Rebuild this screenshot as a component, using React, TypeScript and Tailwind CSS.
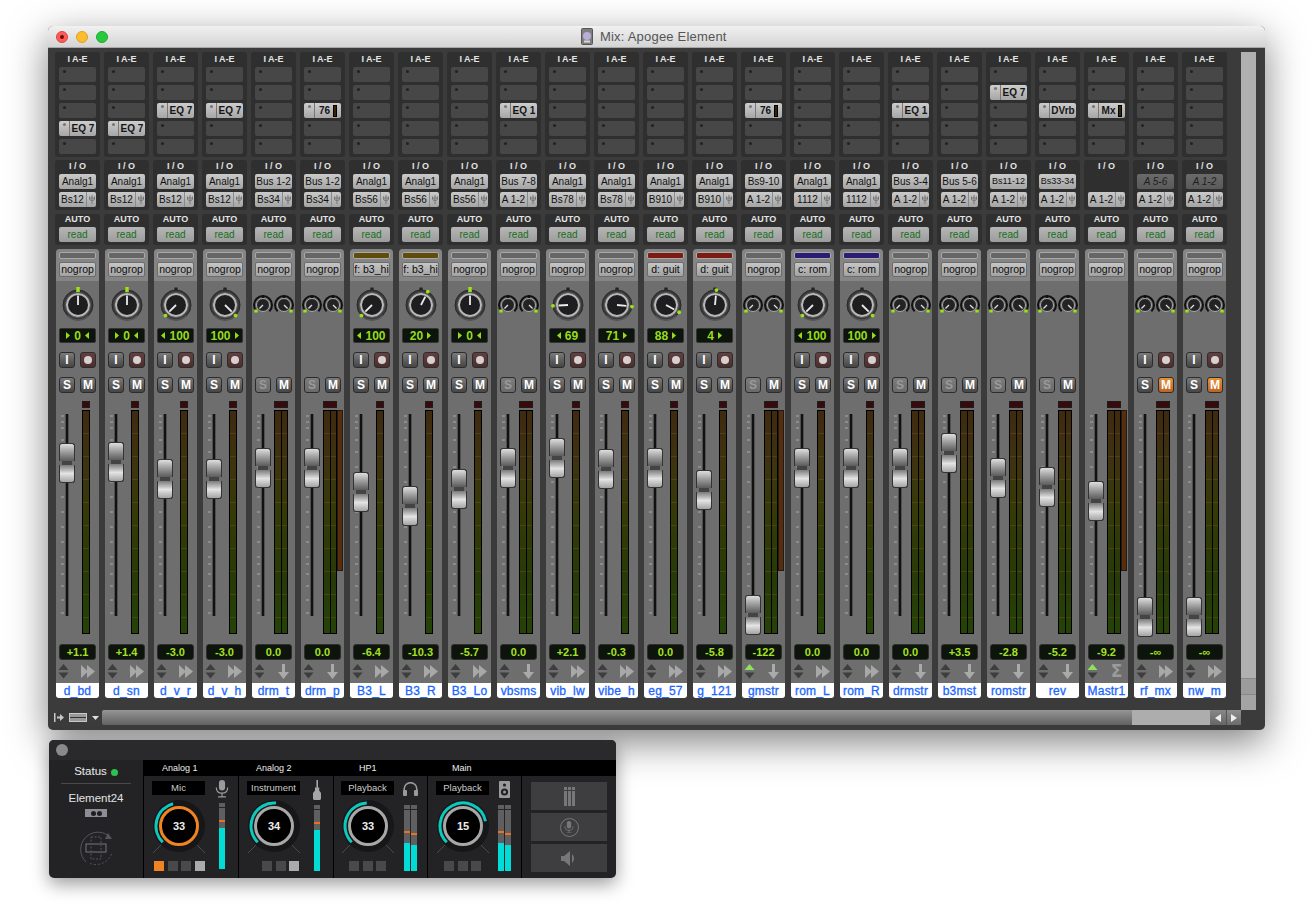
interface Channel {
  name: string
  input: string
  output: string
  value: string
  fader: number
  insert?: [number, string, boolean?]
  group?: string
  bar?: string
  pan?: number
  panText?: string
  stereo?: boolean
  extra?: boolean
  noRec?: boolean
  icon?: 'send' | 'down' | 'sum'
  up?: boolean
  muted?: boolean
}

const channels: Channel[] = [
  { name: 'd_bd', input: 'Analg1', output: 'Bs12', value: '+1.1', fader: 463, insert: [3, 'EQ 7'], pan: 0, panText: '0', icon: 'send' },
  { name: 'd_sn', input: 'Analg1', output: 'Bs12', value: '+1.4', fader: 462, insert: [3, 'EQ 7'], pan: 0, panText: '0', icon: 'send' },
  { name: 'd_v_r', input: 'Analg1', output: 'Bs12', value: '-3.0', fader: 479, insert: [2, 'EQ 7'], pan: -100, panText: '100', icon: 'send' },
  { name: 'd_v_h', input: 'Analg1', output: 'Bs12', value: '-3.0', fader: 479, insert: [2, 'EQ 7'], pan: 100, panText: '100', icon: 'send' },
  { name: 'drm_t', input: 'Bus 1-2', output: 'Bs34', value: '0.0', fader: 468, stereo: true, noRec: true, icon: 'down' },
  { name: 'drm_p', input: 'Bus 1-2', output: 'Bs34', value: '0.0', fader: 468, insert: [2, '76', true], stereo: true, extra: true, noRec: true, icon: 'down' },
  { name: 'B3_L', input: 'Analg1', output: 'Bs56', value: '-6.4', fader: 492, group: 'f: b3_hi', bar: 'bg-[#5f4c0a]', pan: -100, panText: '100', icon: 'send' },
  { name: 'B3_R', input: 'Analg1', output: 'Bs56', value: '-10.3', fader: 506, group: 'f: b3_hi', bar: 'bg-[#5f4c0a]', pan: 20, panText: '20', icon: 'send' },
  { name: 'B3_Lo', input: 'Analg1', output: 'Bs56', value: '-5.7', fader: 489, pan: 0, panText: '0', icon: 'send' },
  { name: 'vbsms', input: 'Bus 7-8', output: 'A 1-2', value: '0.0', fader: 468, insert: [2, 'EQ 1'], stereo: true, noRec: true, icon: 'down' },
  { name: 'vib_lw', input: 'Analg1', output: 'Bs78', value: '+2.1', fader: 458, pan: -69, panText: '69', icon: 'send' },
  { name: 'vibe_h', input: 'Analg1', output: 'Bs78', value: '-0.3', fader: 469, pan: 71, panText: '71', icon: 'send' },
  { name: 'eg_57', input: 'Analg1', output: 'B910', value: '0.0', fader: 468, group: 'd: guit', bar: 'bg-[#7d1a12]', pan: 88, panText: '88', icon: 'send' },
  { name: 'g_121', input: 'Analg1', output: 'B910', value: '-5.8', fader: 490, group: 'd: guit', bar: 'bg-[#7d1a12]', pan: 4, panText: '4', icon: 'send' },
  { name: 'gmstr', input: 'Bs9-10', output: 'A 1-2', value: '-122', fader: 615, insert: [2, '76', true], stereo: true, extra: true, noRec: true, icon: 'down', up: true },
  { name: 'rom_L', input: 'Analg1', output: '1112', value: '0.0', fader: 468, group: 'c: rom', bar: 'bg-[#2a1c72]', pan: -100, panText: '100', icon: 'send' },
  { name: 'rom_R', input: 'Analg1', output: '1112', value: '0.0', fader: 468, group: 'c: rom', bar: 'bg-[#2a1c72]', pan: 100, panText: '100', icon: 'send' },
  { name: 'drmstr', input: 'Bus 3-4', output: 'A 1-2', value: '0.0', fader: 468, insert: [2, 'EQ 1'], stereo: true, noRec: true, icon: 'down' },
  { name: 'b3mst', input: 'Bus 5-6', output: 'A 1-2', value: '+3.5', fader: 453, stereo: true, noRec: true, icon: 'down' },
  { name: 'romstr', input: 'Bs11-12', output: 'A 1-2', value: '-2.8', fader: 478, insert: [1, 'EQ 7'], stereo: true, noRec: true, icon: 'down' },
  { name: 'rev', input: 'Bs33-34', output: 'A 1-2', value: '-5.2', fader: 487, insert: [2, 'DVrb'], stereo: true, noRec: true, icon: 'down' },
  { name: 'Mastr1', input: '', output: 'A 1-2', value: '-9.2', fader: 501, insert: [2, 'Mx', true], stereo: true, extra: true, icon: 'sum', up: true },
  { name: 'rf_mx', input: 'A 5-6', output: 'A 1-2', value: '-∞', fader: 617, stereo: true, icon: 'send', muted: true },
  { name: 'nw_m', input: 'A 1-2', output: 'A 1-2', value: '-∞', fader: 617, stereo: true, icon: 'send', muted: true },
]

const scaleTicks = [2, 8, 14, 26, 38, 53, 68, 83, 98, 113, 128, 143, 150, 160, 172, 186, 199]

function Knob({ pan }: { pan: number }) {
  const angle = (pan / 100) * 135
  const rad = (angle * Math.PI) / 180
  return (
    <svg width="36" height="36" viewBox="-18 -18 36 36">
      <path d="M-1.5 -17.5 H1.5 L2 -14 H-2 Z" fill="#222" />
      <circle r="15" fill="#3a3a3a" stroke="#2a2a2a" />
      <path d="M-10.6 10.6 A15 15 0 0 0 10.6 10.6" fill="none" stroke="#555" strokeWidth="1.5" />
      <circle r="11" fill="#1e1e20" stroke="#b8b8b8" strokeWidth="2" />
      <circle r="12.5" fill="none" stroke="#666" strokeWidth="0.8" />
      <line x1="0" y1="0" x2={Math.sin(rad) * 9.5} y2={-Math.cos(rad) * 9.5} stroke="#ececec" strokeWidth="1.8" />
      {pan === 0 ? (
        <rect x="-1.8" y="-18" width="3.6" height="5" fill="#9be21c" />
      ) : (
        <circle cx={Math.sin(rad) * 15} cy={-Math.cos(rad) * 15} r="1.9" fill="#9be21c" />
      )}
    </svg>
  )
}

function SmallKnob({ side }: { side: 1 | -1 }) {
  const rad = (side * 135 * Math.PI) / 180
  return (
    <svg width="20" height="20" viewBox="-10 -10 20 20">
      <path d="M-6.4 6.4 A9 9 0 1 1 6.4 6.4" fill="none" stroke="#111" strokeWidth="2" />
      <circle r="6.5" fill="#232325" stroke="#a8a8a8" />
      <path d="M-1 -10 L1 -10 L1.4 -7 L-1.4 -7 Z" fill="#111" />
      <line x1="0" y1="0" x2={Math.sin(rad) * 5} y2={-Math.cos(rad) * 5} stroke="#ddd" strokeWidth="1.3" />
      <rect x={side * 7 - 1.7} y="4.5" width="3.4" height="3" fill="#9be21c" />
    </svg>
  )
}

function Insert({ insert }: { insert?: [number, string, boolean?] }) {
  const slots = [0, 1, 2, 3, 4]
  return (
    <div className="flex flex-col gap-[3px]">
      {slots.map((s) =>
        insert && insert[0] === s ? (
          <div key={s} className="h-[15px] flex rounded-[2px] overflow-hidden bg-linear-to-b from-[#cdcdcd] to-[#a6a6a6]">
            <div className="w-[11px] border-r border-[#777] flex justify-center pt-[2px]">
              <div className="w-[3px] h-[3px] rounded-full bg-[#777]" />
            </div>
            <div className="flex-1 flex items-center justify-center gap-[3px] text-[10px] font-bold text-[#151515] leading-none">
              {insert[1]}
              {insert[2] && <div className="w-[4px] h-[12px] bg-[#3a2206] border border-black" />}
            </div>
          </div>
        ) : (
          <div key={s} className="h-[15px] rounded-[2px] bg-[#474747] pl-[4px] pt-[3px]">
            <div className="w-[3px] h-[3px] rounded-full bg-[#222]" />
          </div>
        ),
      )}
    </div>
  )
}

function SquareButton({ kind, label }: { kind: 'gray' | 'rec' | 'off' | 'orange'; label?: string }) {
  const tone = {
    gray: 'from-[#7a7a7a] to-[#454545] text-white',
    rec: 'from-[#64403f] to-[#4a2e2e] text-white',
    off: 'from-[#7c7c7c] to-[#6a6a6a] text-[#9a9a9a]',
    orange: 'from-[#e8923c] to-[#bd6420] text-white',
  }[kind]
  return (
    <div className={`w-[16px] h-[16px] rounded-[3px] border border-[#2c2c2c] bg-linear-to-b ${tone} flex items-center justify-center text-[12px] font-bold leading-none`}>
      {kind === 'rec' ? <div className="w-[8px] h-[8px] rounded-full bg-[#d8d0d0]" /> : label}
    </div>
  )
}

function Triangles({ up }: { up?: boolean }) {
  return (
    <svg width="11" height="15" viewBox="0 0 11 15">
      <path d="M5.5 0 L10.5 6 L0.5 6 Z" fill={up ? '#8fe05a' : '#3d3d3d'} />
      <path d="M0.5 8.5 L10.5 8.5 L5.5 14.5 Z" fill="#3d3d3d" />
    </svg>
  )
}

function RouteIcon({ icon }: { icon?: Channel['icon'] }) {
  if (icon === 'sum') {
    return <span className="text-[17px] leading-none font-bold text-[#9c9c9c] font-['DejaVu_Sans',sans-serif]">Σ</span>
  }
  if (icon === 'down') {
    return (
      <svg width="11" height="15" viewBox="0 0 11 15">
        <path d="M4 0 H7 V8 H11 L5.5 15 L0 8 H4 Z" fill="#aaaaaa" />
      </svg>
    )
  }
  return (
    <svg width="14" height="13" viewBox="0 0 14 13">
      <path d="M0 0 L7 6.5 L0 13 Z M6 0 L14 6.5 L6 13 Z" fill="#a8a8a8" />
    </svg>
  )
}

function Meter({ width }: { width: string }) {
  return (
    <div className={`${width} h-full border border-black bg-[repeating-linear-gradient(to_bottom,transparent_0,transparent_22px,rgba(190,110,40,0.22)_22px,rgba(190,110,40,0.22)_23px),linear-gradient(to_bottom,#3f2a10_0%,#3d3410_25%,#353a08_45%,#273a08_75%,#264208_100%)]`} />
  )
}

function PanArrow({ right }: { right: boolean }) {
  return (
    <svg width="4" height="7" viewBox="0 0 4 7">
      <path d={right ? 'M0 0 L4 3.5 L0 7 Z' : 'M4 0 L0 3.5 L4 7 Z'} fill="#96dc1a" />
    </svg>
  )
}

function Strip({ ch }: { ch: Channel }) {
  const dim = ch.input === 'A 5-6' || (ch.input === 'A 1-2' && ch.muted)
  const longInput = ch.input.startsWith('Bs') && ch.input.length > 6
  return (
    <div className="w-[49px] shrink-0 pt-[4px]">
      <div className="mx-[2px] h-[105px] bg-[#2f2f2f] rounded-[3px] px-[4px]">
        <div className="h-[15px] text-center text-[9px] leading-[14px] font-bold text-[#e4e4e4]">I A-E</div>
        <Insert insert={ch.insert} />
      </div>

      <div className="mx-[2px] mt-[3px] h-[50px] bg-[#2f2f2f] rounded-[3px] px-[4px]">
        <div className="h-[14px] text-center text-[9px] leading-[13px] font-bold text-[#e4e4e4]">I / O</div>
        {ch.input === '' ? (
          <div className="h-[15px]" />
        ) : (
          <div className={`h-[15px] rounded-[2px] bg-linear-to-b flex items-center justify-center whitespace-nowrap leading-none ${longInput ? 'text-[9px]' : 'text-[10px]'} ${dim ? 'from-[#6a6a6a] to-[#5a5a5a] italic text-[#1e1e1e]' : 'from-[#cacaca] to-[#a4a4a4] text-[#111]'}`}>
            {ch.input}
          </div>
        )}
        <div className="mt-[3px] h-[15px] rounded-[2px] bg-linear-to-b from-[#cacaca] to-[#a4a4a4] flex text-[10px] text-[#111] leading-none">
          <div className="flex-1 flex items-center justify-center">{ch.output}</div>
          <div className="w-[10px] border-l border-[#8a8a8a] flex items-center justify-center">
            <svg width="6" height="9" viewBox="0 0 6 9">
              <path d="M3 0 V9 M0.5 3 H5.5 M0.5 1.5 V4 Q0.5 5.5 3 5.5 Q5.5 5.5 5.5 4 V1.5" fill="none" stroke="#777" />
            </svg>
          </div>
        </div>
      </div>

      <div className="mx-[2px] mt-[4px] h-[31px] bg-[#2f2f2f] rounded-[3px] px-[4px]">
        <div className="h-[13px] text-center text-[9px] leading-[11px] font-bold text-[#e4e4e4]">AUTO</div>
        <div className="h-[15px] rounded-[2px] bg-linear-to-b from-[#b6b6b6] to-[#9c9c9c] flex items-center justify-center text-[10px] leading-none text-[#16701a]">
          read
        </div>
      </div>

      <div className="mx-[3px] mt-[4px] h-[449px] bg-[#6e6e6e] rounded-[4px]">
        <div className="h-[32px] bg-[#858585] rounded-t-[4px] px-[3px] pt-[3px]">
          <div className={`h-[7px] rounded-[2px] border border-[#a8a8a8] ${ch.bar ?? 'bg-[#666]'}`} />
          <div className="mt-[3px] h-[15px] rounded-[2px] border border-[#6c6c6c] bg-linear-to-b from-[#c6c6c6] to-[#a2a2a2] flex items-center justify-center text-[10.5px] leading-none text-[#0c0c0c] whitespace-nowrap">
            {ch.group ?? 'nogrop'}
          </div>
        </div>

        <div className="h-[47px] flex justify-center pt-[6px]">
          {ch.stereo ? (
            ch.name !== 'Mastr1' && (
              <div className="flex gap-[1px] pt-[8px]">
                <SmallKnob side={-1} />
                <SmallKnob side={1} />
              </div>
            )
          ) : (
            <Knob pan={ch.pan ?? 0} />
          )}
        </div>

        <div className="h-[15px] mx-[3px]">
          {ch.panText && (
            <div className="h-full rounded-[2px] border border-[#333] bg-[#0c140c] flex items-center justify-center gap-[4px] text-[12px] font-bold leading-none text-[#96dc1a]">
              {ch.pan !== undefined && ch.pan <= 0 && <PanArrow right={ch.pan === 0} />}
              {ch.panText}
              {ch.pan !== undefined && ch.pan >= 0 && <PanArrow right={ch.pan !== 0} />}
            </div>
          )}
        </div>

        <div className="h-[16px] mt-[9px] mx-[3px] flex justify-between">
          {ch.stereo && !ch.muted ? null : (
            <>
              <SquareButton kind="gray" label="I" />
              <SquareButton kind="rec" />
            </>
          )}
        </div>

        <div className="h-[16px] mt-[9px] mx-[3px] flex justify-between">
          {ch.name !== 'Mastr1' && (
            <>
              <SquareButton kind={ch.noRec ? 'off' : 'gray'} label="S" />
              <SquareButton kind={ch.muted ? 'orange' : 'gray'} label="M" />
            </>
          )}
        </div>

        <div className="relative h-[234px] mt-[7px] flex">
          <div className={`${ch.stereo ? 'w-[22px]' : 'w-[26px]'} relative`}>
            <svg width="4" height="204" viewBox="0 0 4 204" className="ml-[5px] mt-[14px]">
              {scaleTicks.map((t) => (
                <line key={t} x1="0" x2="3" y1={t} y2={t} stroke="#a9a9a9" />
              ))}
            </svg>
            <div className="absolute left-[9px] top-[14px] w-[4px] h-[202px] bg-[#111] border-x border-[#505050] rounded-[1px]" />
          </div>
          <div className="flex-1">
            <div className={`${ch.stereo ? 'w-[14px]' : 'w-[8px]'} h-[7px] mt-[1px] bg-[#3a0a0a] border border-[#1c1c1c]`} />
            <div className="h-[224px] mt-[2px] flex">
              <Meter width="w-[8px]" />
              {ch.stereo && <Meter width="w-[7px] -ml-[1px]" />}
              {ch.extra && <div className="w-[6px] h-[161px] bg-[#5a2d0a] border border-[#1c1c1c]" />}
            </div>
          </div>
          <div
            className="absolute left-[3px] w-[16px] h-[40px] flex flex-col"
            style={{ top: ch.fader - 20 - 400 }}
          >
            <div className="h-[18px] rounded-t-[3px] border border-b-0 border-[#333] bg-linear-to-b from-[#dedede] via-[#9a9a9a] to-[#5c5c5c]" />
            <div className="h-[4px] mx-[3px] bg-[#444]" />
            <div className="h-[18px] rounded-b-[3px] border border-t-0 border-[#333] bg-linear-to-b from-[#7c7c7c] via-[#e4e4e4] to-[#a4a4a4]" />
          </div>
        </div>

        <div className="mt-[10px] mx-[3px] h-[16px] rounded-[3px] border border-[#2e2e2e] bg-[#0c140c] flex items-center justify-center text-[11px] font-bold leading-none text-[#a6e024]">
          {ch.value}
        </div>

        <div className="h-[18px] mt-[2px] mx-[2px] flex items-center justify-between pr-[2px]">
          <Triangles up={ch.up} />
          <div className="w-[15px] flex justify-center">
            <RouteIcon icon={ch.icon} />
          </div>
        </div>

        <div className="mt-[3px] h-[15px] bg-white rounded-b-[3px] flex items-center justify-center text-[12px] leading-none text-[#1a66ff] tracking-[0.2px] [-webkit-text-stroke:0.3px_#1a66ff]">
          {ch.name}
        </div>
      </div>
    </div>
  )
}

function MixWindow() {
  return (
    <div className="w-[1217px] h-[704px] rounded-[5px] bg-[#3b3b3b] shadow-[0_12px_38px_rgba(0,0,0,0.5)] overflow-hidden">
      <div className="h-[22px] bg-linear-to-b from-[#f1f1f1] to-[#d4d4d4] flex items-center relative border-b border-[#a8a8a8]">
        <div className="absolute left-[8px] top-[5px] flex gap-[8px]">
          <div className="w-[12px] h-[12px] rounded-full bg-[#fc5c57] border border-[#e0443e] flex items-center justify-center">
            <div className="w-[4px] h-[4px] rounded-full bg-[#6b0f0b]" />
          </div>
          <div className="w-[12px] h-[12px] rounded-full bg-[#fdbc2e] border border-[#dea123]" />
          <div className="w-[12px] h-[12px] rounded-full bg-[#28c83f] border border-[#1dad2b]" />
        </div>
        <div className="ml-[533px] flex items-center gap-[7px] text-[13px] tracking-[0.2px] text-[#555]">
          <svg width="12" height="17" viewBox="0 0 12 17">
            <rect x="0.5" y="0.5" width="11" height="16" rx="1" fill="#7e7e7e" stroke="#555" />
            <circle cx="6" cy="8" r="4" fill="#b9aed6" />
            <rect x="3" y="12.5" width="6" height="2" fill="#d8d8d8" />
          </svg>
          Mix: Apogee Element
        </div>
      </div>

      <div className="h-[662px] flex">
        <div className="pl-[5px] flex w-[1193px]">
          {channels.map((ch) => (
            <Strip key={ch.name} ch={ch} />
          ))}
        </div>
        <div className="w-[15px] mt-[4px] flex flex-col">
          <div className="h-[626px] bg-[#b0b0b0]" />
          <div className="h-[16px] bg-[#9c9c9c] border-t border-[#888]" />
          <div className="h-[16px] bg-[#a4a4a4] border-t border-[#888]" />
        </div>
      </div>

      <div className="h-[15px] flex items-stretch">
        <div className="w-[54px] pl-[6px] flex items-center gap-[5px]">
          <svg width="10" height="9" viewBox="0 0 10 9">
            <path d="M0 0 H1.5 V9 H0 Z M3 3.5 H6 V1 L10 4.5 L6 8 V5.5 H3 Z" fill="#c8c8c8" />
          </svg>
          <div className="w-[18px] h-[9px] border border-[#c8c8c8] bg-[#999] flex flex-col justify-center">
            <div className="h-[1px] bg-[#333]" />
          </div>
          <svg width="7" height="4" viewBox="0 0 7 4">
            <path d="M0 0 H7 L3.5 4 Z" fill="#ddd" />
          </svg>
        </div>
        <div className="w-[1030px] bg-linear-to-b from-[#959595] to-[#626262] rounded-l-[2px]" />
        <div className="w-[78px] bg-[#adadad]" />
        <div className="w-[16px] bg-linear-to-b from-[#888] to-[#666] flex items-center justify-center">
          <svg width="6" height="8" viewBox="0 0 6 8">
            <path d="M6 0 V8 L0 4 Z" fill="#eee" />
          </svg>
        </div>
        <div className="w-[15px] bg-linear-to-b from-[#8e8e8e] to-[#6c6c6c] flex items-center justify-center border-l border-[#555]">
          <svg width="6" height="8" viewBox="0 0 6 8">
            <path d="M0 0 V8 L6 4 Z" fill="#eee" />
          </svg>
        </div>
      </div>
    </div>
  )
}

function GainKnob({ value, color, sweep }: { value: string; color: string; sweep: number }) {
  const r = 23
  const start = (-135 * Math.PI) / 180
  const end = ((sweep - 135) * Math.PI) / 180
  const large = sweep > 180 ? 1 : 0
  const arc = `M${Math.sin(start) * r} ${-Math.cos(start) * r} A${r} ${r} 0 ${large} 1 ${Math.sin(end) * r} ${-Math.cos(end) * r}`
  return (
    <div className="relative w-[54px] h-[54px]">
      <svg width="54" height="54" viewBox="-27 -27 54 54">
        <circle r="26" fill="#171719" />
        <path d={arc} fill="none" stroke="#0cc9bd" strokeWidth="3" />
        <circle r="18.5" fill="#000" stroke={color} strokeWidth="3" />
        <path d="M-18 19 L-26 27 M18 19 L26 27" stroke="#4a4a4c" />
      </svg>
      <div className="absolute inset-0 flex items-center justify-center text-[11px] font-bold text-[#eee]">{value}</div>
    </div>
  )
}

function LevelBar({ fill, mark }: { fill: string; mark: string }) {
  return (
    <div className="w-[6px] h-[66px] bg-[#5f5f61] flex flex-col justify-end relative">
      <div className="absolute top-[4px] inset-x-0 h-[1px] bg-[#26262a]" />
      <div className={`absolute inset-x-0 h-[2px] bg-[#e8731c] ${mark}`} />
      <div className={`${fill} bg-[#02dcd6]`} />
    </div>
  )
}

function SmallSquares({ tone }: { tone: string[] }) {
  return (
    <div className="flex gap-[3.5px]">
      {tone.map((t, i) => (
        <div key={i} className={`w-[10px] h-[10px] ${t}`} />
      ))}
    </div>
  )
}

function MicIcon({ fill, size }: { fill: string; size: number }) {
  return (
    <svg width={size} height={size * 1.25} viewBox="0 0 16 20">
      <rect x="4.5" y="0" width="7" height="12" rx="3.5" fill={fill} />
      <path d="M1.5 8.5 Q1.5 15 8 15 Q14.5 15 14.5 8.5 M8 15 V19 M3.5 19.3 H12.5" fill="none" stroke={fill} strokeWidth="1.4" />
    </svg>
  )
}

function HeadphonesIcon() {
  return (
    <svg width="15" height="14" viewBox="0 0 15 14">
      <path d="M1.2 9 V7 A6.3 6.3 0 0 1 13.8 7 V9" fill="none" stroke="#9a9a9a" strokeWidth="1.6" />
      <rect x="0" y="8" width="4" height="6" rx="1" fill="#9a9a9a" />
      <rect x="11" y="8" width="4" height="6" rx="1" fill="#9a9a9a" />
    </svg>
  )
}

function GuitarIcon() {
  return (
    <svg width="8" height="20" viewBox="0 0 8 20">
      <path d="M3.4 0 H5 V8 L6.2 7 V10.5 L8 13 V19 L7 20 H1 L0 19 V13 L2 10.5 V7 L3.4 8 Z" fill="#a6a6a6" />
    </svg>
  )
}

function SpeakerBox() {
  return (
    <svg width="11" height="17" viewBox="0 0 11 17">
      <rect width="11" height="17" rx="1" fill="#9a9a9a" />
      <circle cx="5.5" cy="4" r="1.6" fill="#222" />
      <circle cx="5.5" cy="11" r="3.6" fill="#222" />
      <circle cx="5.5" cy="11" r="1.5" fill="#9a9a9a" />
    </svg>
  )
}

function ElementWindow() {
  const col = 'border-r border-black shrink-0'
  const headerLabel = 'h-[16px] bg-black text-[9px] leading-[17px] text-[#eee]'
  const dropdown = 'w-[53px] h-[14px] bg-black text-[9.5px] leading-[14px] text-center text-[#ccc]'
  return (
    <div className="ml-[1px] mt-[10px] w-[567px] h-[138px] rounded-[5px] bg-[#232326] shadow-[0_6px_18px_rgba(0,0,0,0.4)] overflow-hidden">
      <div className="h-[20px] pl-[7px] pt-[4px] bg-[#2a2a2d]">
        <div className="w-[12px] h-[12px] rounded-full bg-[#8a8a8c]" />
      </div>
      <div className="flex h-[118px]">
        <div className="w-[95px] border-r border-black flex flex-col items-center">
          <div className="mt-[3px] h-[18px] flex items-center gap-[4px] text-[11.5px] text-[#ececec]">
            Status <div className="w-[7px] h-[7px] rounded-full bg-[#2fc14f]" />
          </div>
          <div className="w-[70px] h-px bg-[#4a4a4c] mt-[2px]" />
          <div className="mt-[8px] text-[11.5px] leading-[13px] text-[#e4e4e4]">Element24</div>
          <div className="mt-[4px] w-[22px] h-[8px] bg-[#8d8d96] flex items-center justify-center gap-px">
            <div className="w-[5px] h-[5px] rounded-full bg-[#1e1e22]" />
            <div className="w-[5px] h-[5px] rounded-full bg-[#1e1e22]" />
          </div>
          <svg width="38" height="38" viewBox="-19 -19 38 38" className="mt-[12px]">
            <path d="M14 -11 A17 17 0 1 0 -10 14" fill="none" stroke="#56565a" />
            <path d="M-6 15.5 A17 17 0 0 0 16 5" fill="none" stroke="#56565a" strokeDasharray="2 2" />
            <path d="M12 -15 L16 -9 L9 -9 Z" fill="#56565a" />
            <rect x="-10" y="-4" width="20" height="8" fill="none" stroke="#76767a" />
            <rect x="-5" y="-11" width="10" height="22" fill="none" stroke="#56565a" strokeDasharray="2 1.5" />
          </svg>
        </div>

        <div className={`${col} w-[95px]`}>
          <div className={`${headerLabel} pl-[18px]`}>Analog 1</div>
          <div className="flex pl-[8px] pt-[5px]">
            <div className="w-[53px]">
              <div className={dropdown}>Mic</div>
              <div className="mt-[4px]"><GainKnob value="33" color="#f08422" sweep={120} /></div>
              <div className="mt-[8px] ml-[2px]">
                <SmallSquares tone={['bg-[#f08422]', 'bg-[#49494c]', 'bg-[#49494c]', 'bg-[#ababab]']} />
              </div>
            </div>
            <div className="ml-[14px] flex flex-col items-center w-[6px]">
              <div className="shrink-0 -mt-[1px]"><MicIcon fill="#9a9a9a" size={14} /></div>
              <div className="mt-[5px]"><LevelBar fill="h-[41px]" mark="top-[17px]" /></div>
            </div>
          </div>
        </div>

        <div className={`${col} w-[95px]`}>
          <div className={`${headerLabel} pl-[17px]`}>Analog 2</div>
          <div className="flex pl-[8px] pt-[5px]">
            <div className="w-[53px]">
              <div className={dropdown}>Instrument</div>
              <div className="mt-[4px]"><GainKnob value="34" color="#a8a8a8" sweep={140} /></div>
              <div className="mt-[8px] ml-[15px]">
                <SmallSquares tone={['bg-[#49494c]', 'bg-[#49494c]', 'bg-[#ababab]']} />
              </div>
            </div>
            <div className="ml-[14px] flex flex-col items-center w-[6px]">
              <div className="shrink-0 -mt-[1px]"><GuitarIcon /></div>
              <div className="mt-[5px]"><LevelBar fill="h-[41px]" mark="top-[17px]" /></div>
            </div>
          </div>
        </div>

        <div className={`${col} w-[94px]`}>
          <div className={`${headerLabel} pl-[25px]`}>HP1</div>
          <div className="flex pl-[7px] pt-[5px]">
            <div className="w-[53px]">
              <div className={dropdown}>Playback</div>
              <div className="mt-[4px]"><GainKnob value="33" color="#a8a8a8" sweep={132} /></div>
              <div className="mt-[8px] ml-[8px]">
                <SmallSquares tone={['bg-[#49494c]', 'bg-[#49494c]', 'bg-[#49494c]']} />
              </div>
            </div>
            <div className="ml-[10px] flex flex-col items-center w-[13px]">
              <div className="shrink-0 mt-[1px]"><HeadphonesIcon /></div>
              <div className="mt-[9px] flex gap-px">
                <LevelBar fill="h-[28px]" mark="top-[26px]" />
                <LevelBar fill="h-[26px]" mark="top-[28px]" />
              </div>
            </div>
          </div>
        </div>

        <div className={`${col} w-[94px]`}>
          <div className={`${headerLabel} pl-[24px]`}>Main</div>
          <div className="flex pl-[8px] pt-[5px]">
            <div className="w-[53px]">
              <div className={dropdown}>Playback</div>
              <div className="mt-[4px]"><GainKnob value="15" color="#a8a8a8" sweep={213} /></div>
              <div className="mt-[8px] ml-[8px]">
                <SmallSquares tone={['bg-[#49494c]', 'bg-[#49494c]', 'bg-[#49494c]']} />
              </div>
            </div>
            <div className="ml-[9px] flex flex-col items-center w-[13px]">
              <SpeakerBox />
              <div className="mt-[7px] flex gap-px">
                <LevelBar fill="h-[28px]" mark="top-[26px]" />
                <LevelBar fill="h-[26px]" mark="top-[28px]" />
              </div>
            </div>
          </div>
        </div>

        <div className="flex-1">
          <div className="h-[16px] bg-black" />
          <div className="px-[9px] pt-[6px] flex flex-col gap-[3px]">
            <div className="h-[28px] bg-[#3e3e41] flex items-center justify-center gap-[1px]">
              {[0, 1, 2].map((i) => (
                <div key={i} className="w-[3px] flex flex-col gap-[1px]">
                  <div className="h-[3px] bg-[#77777a]" />
                  <div className="h-[15px] bg-[#77777a]" />
                </div>
              ))}
            </div>
            <div className="h-[28px] bg-[#3e3e41] flex items-center justify-center">
              <div className="w-[19px] h-[19px] rounded-full border border-[#77777a] flex items-center justify-center">
                <MicIcon fill="#77777a" size={10} />
              </div>
            </div>
            <div className="h-[28px] bg-[#3e3e41] flex items-center justify-center">
              <svg width="16" height="15" viewBox="0 0 16 15">
                <path d="M0 5 H3 L9 0 V15 L3 10 H0 Z" fill="#77777a" />
                <path d="M11 3 A6 6 0 0 1 11 12 Z" fill="#77777a" />
              </svg>
            </div>
          </div>
        </div>
      </div>
    </div>
  )
}

export default function App() {
  return (
    <div className="w-[1313px] h-[919px] bg-white overflow-hidden pt-[26px] pl-[48px] font-['Liberation_Sans',Arial,sans-serif]">
      <MixWindow />
      <ElementWindow />
    </div>
  )
}
